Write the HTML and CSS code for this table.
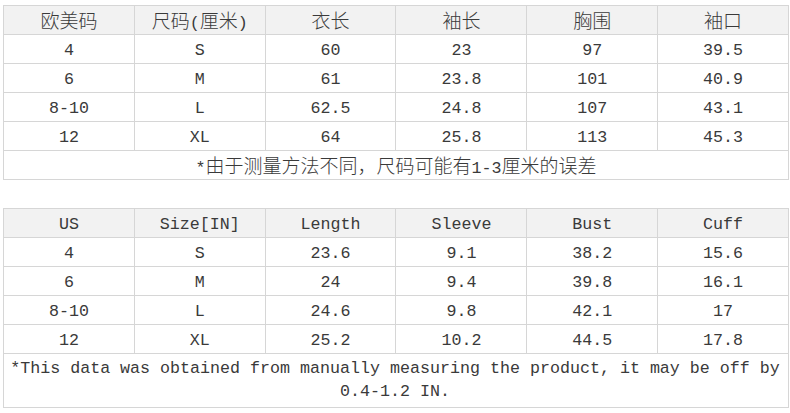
FILE: index.html
```html
<!DOCTYPE html>
<html lang="zh">
<head>
<meta charset="utf-8">
<link rel="stylesheet" href="styles.css">
</head>
<body>
<main class="page">
  <table class="size-table">
    <tr class="head">
      <td><span class="zh">欧美码</span></td>
      <td><span class="zh">尺码</span>(<span class="zh">厘米</span>)</td>
      <td><span class="zh">衣长</span></td>
      <td><span class="zh">袖长</span></td>
      <td><span class="zh">胸围</span></td>
      <td><span class="zh">袖口</span></td>
    </tr>
    <tr><td>4</td><td>S</td><td>60</td><td>23</td><td>97</td><td>39.5</td></tr>
    <tr><td>6</td><td>M</td><td>61</td><td>23.8</td><td>101</td><td>40.9</td></tr>
    <tr><td>8-10</td><td>L</td><td>62.5</td><td>24.8</td><td>107</td><td>43.1</td></tr>
    <tr><td>12</td><td>XL</td><td>64</td><td>25.8</td><td>113</td><td>45.3</td></tr>
    <tr class="note"><td colspan="6">*<span class="zh">由于测量方法不同，尺码可能有</span>1-3<span class="zh">厘米的误差</span></td></tr>
  </table>

  <table class="size-table">
    <tr class="head">
      <td>US</td><td>Size[IN]</td><td>Length</td><td>Sleeve</td><td>Bust</td><td>Cuff</td>
    </tr>
    <tr><td>4</td><td>S</td><td>23.6</td><td>9.1</td><td>38.2</td><td>15.6</td></tr>
    <tr><td>6</td><td>M</td><td>24</td><td>9.4</td><td>39.8</td><td>16.1</td></tr>
    <tr><td>8-10</td><td>L</td><td>24.6</td><td>9.8</td><td>42.1</td><td>17</td></tr>
    <tr><td>12</td><td>XL</td><td>25.2</td><td>10.2</td><td>44.5</td><td>17.8</td></tr>
    <tr class="note long"><td colspan="6">*This data was obtained from manually measuring the product, it may be off by 0.4-1.2 IN.</td></tr>
  </table>
</main>
</body>
</html>
```

FILE: styles.css
```css
html, body {
  margin: 0;
  padding: 0;
  background: #ffffff;
}

.page {
  display: flex;
  flex-direction: column;
  gap: 28px;
  padding: 5px 1px 0 3px;
  width: 786px;
}

.size-table {
  width: 786px;
  border-collapse: collapse;
  table-layout: fixed;
  font-family: "Liberation Mono", "Noto Sans CJK SC", monospace;
  font-size: 16.67px;
  color: #3a3a3a;
}

.size-table td {
  border: 1px solid #d6d6d6;
  height: 29px;
  padding: 3px 0 0 0;
  box-sizing: border-box;
  text-align: center;
  vertical-align: middle;
  line-height: 20px;
  white-space: nowrap;
}

.size-table .head td {
  background: #f2f2f2;
}

.zh {
  font-family: "Noto Sans CJK SC", sans-serif;
  font-size: 19px;
  font-weight: 300;
}

.note td {
  background: #ffffff;
}

.long td {
  white-space: normal;
  height: 53px;
  line-height: 23px;
  padding: 3px 2px 4px 0;
}
```
